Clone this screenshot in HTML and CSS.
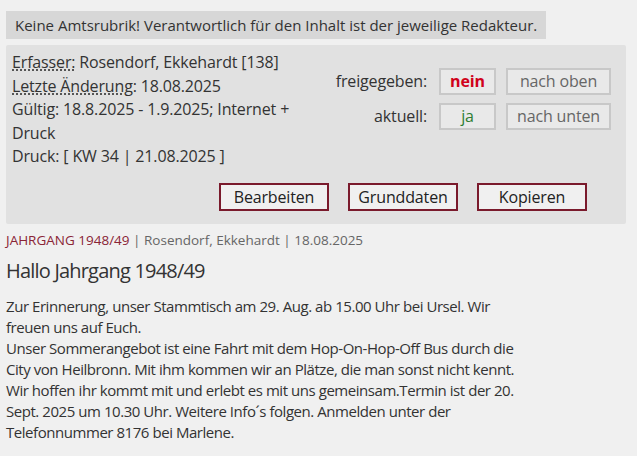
FILE: index.html
```html
<!DOCTYPE html>
<html>
<head>
    <title>Hallo Jahrgang 1948/49</title>
    <link rel="stylesheet" href="styles.css">
</head>
<body>
    <div class="notice">Keine Amtsrubrik! Verantwortlich für den Inhalt ist der jeweilige Redakteur.</div>

    <div class="admin-box">
        <div class="admin-top">
            <div class="info">
                <div><abbr title="Erfasser">Erfasser:</abbr> Rosendorf, Ekkehardt [138]</div>
                <div><abbr title="Letzte Änderung">Letzte Änderung:</abbr> 18.08.2025</div>
                <div>Gültig: 18.8.2025 - 1.9.2025; Internet + Druck</div>
                <div>Druck: [ KW 34 | 21.08.2025 ]</div>
            </div>
            <div class="status">
                <div class="status-row">
                    <span class="label">freigegeben:</span>
                    <span class="flag no">nein</span>
                    <span class="move">nach oben</span>
                </div>
                <div class="status-row">
                    <span class="label">aktuell:</span>
                    <span class="flag yes">ja</span>
                    <span class="move">nach unten</span>
                </div>
            </div>
        </div>
        <div class="actions">
            <button>Bearbeiten</button>
            <button>Grunddaten</button>
            <button>Kopieren</button>
        </div>
    </div>

    <div class="meta"><span class="rubrik">JAHRGANG 1948/49</span> | Rosendorf, Ekkehardt | 18.08.2025</div>
    <h1>Hallo Jahrgang 1948/49</h1>
    <p class="text">Zur Erinnerung, unser Stammtisch am 29. Aug. ab 15.00 Uhr bei Ursel. Wir freuen uns auf Euch.<br>
    Unser Sommerangebot ist eine Fahrt mit dem Hop-On-Hop-Off Bus durch die City von Heilbronn. Mit ihm kommen wir an Plätze, die man sonst nicht kennt. Wir hoffen ihr kommt mit und erlebt es mit uns gemeinsam.Termin ist der 20. Sept. 2025 um 10.30 Uhr. Weitere Info´s folgen. Anmelden unter der Telefonnummer 8176 bei Marlene.</p>
</body>
</html>
```

FILE: styles.css
```css
body {
    margin: 0;
    padding: 11px 11px 0 6px;
    background: #f0f0f0;
    color: #333;
    font-family: "Open Sans", Arial, sans-serif;
    font-size: 16px;
}

.notice {
    display: inline-block;
    background: #d7d7d7;
    font-size: 15px;
    line-height: 28px;
    padding: 0 9px;
}

.admin-box {
    margin-top: 6px;
    background: #e1e1e1;
    border-radius: 2px;
    padding: 6px 15px 13px 6px;
    line-height: 23.5px;
    letter-spacing: -0.15px;
}
.admin-top { display: flex; justify-content: space-between; }
.info { width: 300px; }
abbr { text-decoration: underline dotted; text-underline-offset: 2px; }

.status { padding-top: 17px; display: flex; flex-direction: column; gap: 8px; }
.status-row { display: flex; align-items: center; }
.label { width: 100px; text-align: right; margin-right: 12px; }
.flag, .move {
    box-sizing: border-box;
    height: 27px;
    line-height: 23px;
    border: 2px solid #c8c8c8;
    text-align: center;
    background: #e9e9e9;
}
.flag { width: 57px; margin-right: 10px; }
.move { width: 105px; color: #666; }
.no { color: #d0021b; font-weight: bold; }
.yes { color: #2e7d32; }

.actions { display: flex; justify-content: flex-end; gap: 19px; margin-top: 14px; padding-right: 24px; }
.actions button {
    box-sizing: border-box;
    width: 110px;
    height: 28px;
    border: 2px solid #7a1a2c;
    background: #f0f0f0;
    font-family: inherit;
    font-size: 16px;
    letter-spacing: -0.15px;
    color: #222;
    padding: 0;
}

.meta { margin-top: 7px; font-size: 13.5px; color: #666; line-height: 18px; }
.rubrik { color: #8a2436; }

h1 { font-size: 20px; font-weight: normal; letter-spacing: -0.8px; margin: 7px 0 0; line-height: 30px; }
.text { margin: 10px 0 0; max-width: 520px; font-size: 15px; line-height: 21px; letter-spacing: -0.45px; }
```
